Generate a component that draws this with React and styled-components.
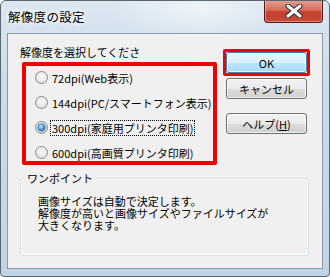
import styled, { createGlobalStyle } from "styled-components";

const Global = createGlobalStyle`
  html, body { margin: 0; padding: 0; background: #ffffff; }
  body { font-family: "Noto Sans CJK JP", "Liberation Sans", sans-serif; }
`;

const options = [
  { id: 72, label: "72dpi(Web表示)" },
  { id: 144, label: "144dpi(PC/スマートフォン表示)" },
  { id: 300, label: "300dpi(家庭用プリンタ印刷)" },
  { id: 600, label: "600dpi(高画質プリンタ印刷)" },
];

const DpiDialog = () => {
  const selected = 300;

  return (
    <Window>
      <TitleBar>
        <Title>解像度の設定</Title>
        <CloseButton>
          <svg width="20" height="14" viewBox="0 0 20 14">
            <path d="M4 2 L16 12 M16 2 L4 12" stroke="#2b2f3a" strokeWidth="5" strokeLinecap="round" />
            <path d="M4 2 L16 12 M16 2 L4 12" stroke="#ffffff" strokeWidth="3" strokeLinecap="round" />
          </svg>
        </CloseButton>
      </TitleBar>

      <Client>
        <TopRow>
          <LeftCol>
            <GroupLabel>解像度を選択してくださ</GroupLabel>
            <Highlight>
              <RadioList>
                {options.map((o) => (
                  <RadioRow key={o.id}>
                    <RadioDot checked={o.id === selected} />
                    <RadioText focused={o.id === selected}>{o.label}</RadioText>
                  </RadioRow>
                ))}
              </RadioList>
            </Highlight>
          </LeftCol>

          <ButtonCol>
            <OkHighlight>
              <Button primary>OK</Button>
            </OkHighlight>
            <Button offset>キャンセル</Button>
            <Button offset gap>
              ヘルプ(<u>H</u>)
            </Button>
          </ButtonCol>
        </TopRow>

        <HintBox>
          <Legend>ワンポイント</Legend>
          <HintText>
            <HintLine>画像サイズは自動で決定します。</HintLine>
            <HintLine>解像度が高いと画像サイズやファイルサイズが</HintLine>
            <HintLine>大きくなります。</HintLine>
          </HintText>
        </HintBox>
      </Client>
    </Window>
  );
};

export default function App() {
  return (
    <>
      <Global />
      <DpiDialog />
    </>
  );
}

const Window = styled.div`
  width: 330px;
  height: 277px;
  box-sizing: border-box;
  display: flex;
  flex-direction: column;
  border: 1px solid #5d6670;
  border-radius: 6px 6px 4px 4px;
  background:
    radial-gradient(ellipse 90px 30px at 200px 8px, rgba(255, 255, 255, 0.55), rgba(255, 255, 255, 0)),
    linear-gradient(180deg, #dbe7f1 0%, #cbdcea 30%, #c0d4e5 100%);
  overflow: hidden;
`;

const TitleBar = styled.div`
  height: 32px;
  display: flex;
  justify-content: space-between;
  align-items: flex-start;
  flex-shrink: 0;
`;

const Title = styled.div`
  margin: 8px 0 0 7px;
  font-size: 12.5px;
  line-height: 16px;
  color: #000;
  letter-spacing: 0.3px;
  text-shadow: 0 0 4px #ffffff, 0 0 6px #ffffff;
`;

const CloseButton = styled.div`
  width: 59px;
  height: 23px;
  margin: -1px 6px 0 0;
  box-sizing: border-box;
  border: 1px solid #4a1d1a;
  border-top: none;
  border-radius: 0 0 4px 4px;
  background: linear-gradient(180deg, #e6a093 0%, #d66d5c 45%, #c2402d 55%, #c94b36 100%);
  box-shadow: inset 0 0 0 1px rgba(255, 200, 190, 0.5);
  display: flex;
  align-items: center;
  justify-content: center;
`;

const Client = styled.div`
  flex: 1;
  margin: 0 6px 7px 6px;
  border: 1px solid #8a99a8;
  background: #f0f0f0;
  font-size: 11px;
  color: #000;
  display: flex;
  flex-direction: column;
`;

const TopRow = styled.div`
  display: flex;
`;

const LeftCol = styled.div`
  padding: 11px 0 0 12px;
  display: flex;
  flex-direction: column;
`;

const GroupLabel = styled.div`
  line-height: 14px;
  height: 14px;
`;

const Highlight = styled.div`
  margin: 3px 0 0 2px;
  width: 195px;
  height: 103px;
  box-sizing: border-box;
  border: 4px solid #f00000;
  border-radius: 2px;
`;

const RadioList = styled.div`
  padding: 2px 0 0 9px;
  display: flex;
  flex-direction: column;
  gap: 6px;
`;

const RadioRow = styled.div`
  height: 19px;
  display: flex;
  align-items: center;
  gap: 3px;
`;

const RadioDot = styled.span`
  width: 13px;
  height: 13px;
  box-sizing: border-box;
  border-radius: 50%;
  border: 1px solid #8b8b8b;
  background: radial-gradient(circle at 50% 40%, #fbfbfb 0%, #e9e9e9 55%, #cfcfcf 100%);
  display: flex;
  align-items: center;
  justify-content: center;
  flex-shrink: 0;

  &::after {
    content: "";
    width: 7px;
    height: 7px;
    border-radius: 50%;
    display: ${(p) => (p.checked ? "block" : "none")};
    background: radial-gradient(circle at 40% 35%, #d5efff 0%, #4fa3e8 40%, #13509c 100%);
    box-shadow: 0 0 0 0.5px #1b3f6e;
  }
`;

const RadioText = styled.span`
  line-height: 14px;
  padding: 0 1px;
  outline: ${(p) => (p.focused ? "1px dotted #000" : "none")};
  white-space: nowrap;
`;

const ButtonCol = styled.div`
  margin-left: 6px;
  padding-top: 15px;
  display: flex;
  flex-direction: column;
  align-items: flex-start;
`;

const OkHighlight = styled.div`
  border: 3px solid #f00000;
  border-radius: 2px;
  display: flex;
`;

const Button = styled.div`
  width: 81px;
  height: 21px;
  box-sizing: border-box;
  margin-left: ${(p) => (p.offset ? "3px" : "0")};
  margin-top: ${(p) => (p.gap ? "14px" : p.offset ? "2px" : "0")};
  border: 1px solid ${(p) => (p.primary ? "#3c7fb1" : "#707070")};
  border-radius: 3px;
  background: ${(p) =>
    p.primary
      ? "linear-gradient(180deg, #eaf6fd 0%, #d9f0fc 50%, #bee6fd 51%, #a7d9f5 100%)"
      : "linear-gradient(180deg, #f2f2f2 0%, #ebebeb 50%, #dddddd 51%, #cfcfcf 100%)"};
  box-shadow: inset 0 0 0 1px rgba(255, 255, 255, 0.7);
  display: flex;
  align-items: center;
  justify-content: center;
  font-size: 11px;
  line-height: 14px;

  & u {
    text-underline-offset: 1px;
  }
`;

const HintBox = styled.div`
  margin: 13px 13px 0 12px;
  height: 78px;
  box-sizing: border-box;
  border: 1px solid #d5dfe5;
  border-radius: 3px;
  box-shadow: inset 0 0 0 1px #ffffff;
  display: flex;
  flex-direction: column;
  align-items: flex-start;
`;

const Legend = styled.div`
  margin: -8px 0 0 4px;
  padding: 0 2px;
  background: #f0f0f0;
  line-height: 14px;
`;

const HintText = styled.div`
  margin: 10px 0 0 17px;
  display: flex;
  flex-direction: column;
`;

const HintLine = styled.div`
  height: 12px;
  line-height: 12px;
  white-space: nowrap;
`;
